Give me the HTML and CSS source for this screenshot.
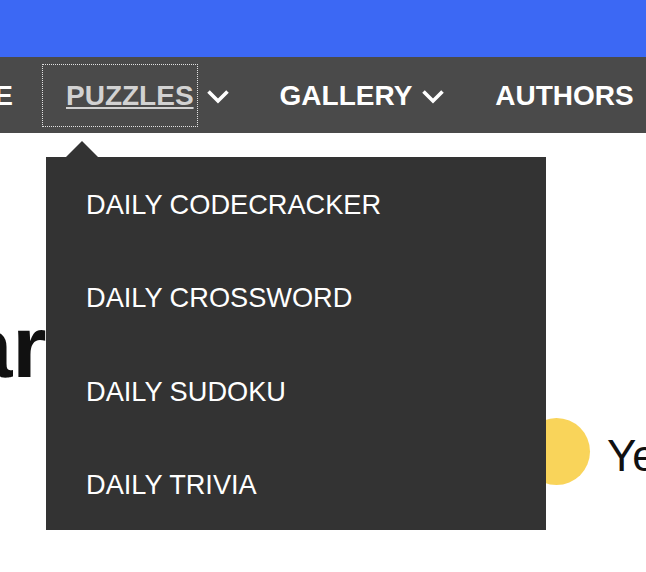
FILE: index.html
```html
<!DOCTYPE html>
<html lang="en">
<head>
<meta charset="utf-8">
<title>Puzzles</title>
<link rel="stylesheet" href="styles.css">
</head>
<body>
<header class="topbar"></header>
<nav class="mainnav">
  <ul class="nav-list">
    <li class="nav-item"><a class="nav-link" href="#">HOME</a></li>
    <li class="nav-item">
      <a class="nav-link is-focused" href="#">PUZZLES</a>
      <svg class="caret" viewBox="0 0 24 15" aria-hidden="true"><polyline points="2.5,2.5 12,12 21.5,2.5" fill="none" stroke="#fff" stroke-width="3.6" stroke-linejoin="miter"/></svg>
      <div class="dropdown">
        <ul class="dropdown-list">
          <li><a class="dropdown-link" href="#">DAILY CODECRACKER</a></li>
          <li><a class="dropdown-link" href="#">DAILY CROSSWORD</a></li>
          <li><a class="dropdown-link" href="#">DAILY SUDOKU</a></li>
          <li><a class="dropdown-link" href="#">DAILY TRIVIA</a></li>
        </ul>
      </div>
    </li>
    <li class="nav-item">
      <a class="nav-link" href="#">GALLERY</a>
      <svg class="caret caret-tight" viewBox="0 0 24 15" aria-hidden="true"><polyline points="2.5,2.5 12,12 21.5,2.5" fill="none" stroke="#fff" stroke-width="3.6" stroke-linejoin="miter"/></svg>
    </li>
    <li class="nav-item"><a class="nav-link" href="#">AUTHORS</a></li>
  </ul>
</nav>
<main class="content">
  <h1 class="title">Calendar</h1>
  <div class="choice">
    <span class="dot"></span>
    <span class="choice-label">Yes</span>
  </div>
</main>
</body>
</html>
```
FILE: styles.css
```css
html {
  overflow: hidden;
  height: 100%;
}
body {
  margin: 0;
  padding: 0;
  min-height: 100%;
  font-family: "Liberation Sans", Arial, Helvetica, sans-serif;
  background: #fff;
  color: #111;
}
.topbar {
  height: 57px;
  background: #3c68f4;
}
.mainnav {
  height: 76px;
  background: #4a4a4a;
  position: relative;
  z-index: 10;
}
.nav-list {
  display: flex;
  height: 100%;
  margin: 0 0 0 -94px;
  padding: 0;
  list-style: none;
  gap: 27px;
  white-space: nowrap;
}
.nav-item {
  position: relative;
  display: flex;
  align-items: center;
  flex: none;
}
.nav-link {
  display: block;
  padding: 0 3px 0 23px;
  line-height: 61px;
  font-size: 28px;
  font-weight: bold;
  color: #fff;
  text-decoration: none;
}
.nav-link.is-focused {
  color: #d2d2d2;
  text-decoration: underline;
  outline: 1px dotted #e2e2e2;
}
.caret {
  width: 24px;
  height: 15px;
  margin-left: 9px;
  margin-top: 3px;
  flex: none;
}
.caret-tight {
  margin-left: 6px;
}
.dropdown {
  position: absolute;
  left: 3px;
  top: calc(100% + 24px);
  width: 500px;
  background: #333;
}
.dropdown::before {
  content: "";
  position: absolute;
  top: -16px;
  left: 20px;
  border-left: 16px solid transparent;
  border-right: 16px solid transparent;
  border-bottom: 16px solid #333;
}
.dropdown-list {
  list-style: none;
  margin: 0;
  padding: 0;
}
.dropdown-link {
  display: block;
  padding: 34px 39px 32px 40px;
  line-height: 27.25px;
  font-size: 27.2px;
  color: #fff;
  text-decoration: none;
}
.title {
  margin: 170px 0 0 -330px;
  font-size: 88px;
  line-height: 88px;
  font-weight: bold;
  color: #111;
  white-space: nowrap;
}
.choice {
  display: flex;
  align-items: center;
  gap: 17px;
  margin: 27px 0 0 523px;
}
.dot {
  width: 67px;
  height: 67px;
  border-radius: 50%;
  background: #f9d45a;
  flex: none;
}
.choice-label {
  font-size: 44px;
  padding-top: 8px;
  color: #111;
  white-space: nowrap;
}
```
